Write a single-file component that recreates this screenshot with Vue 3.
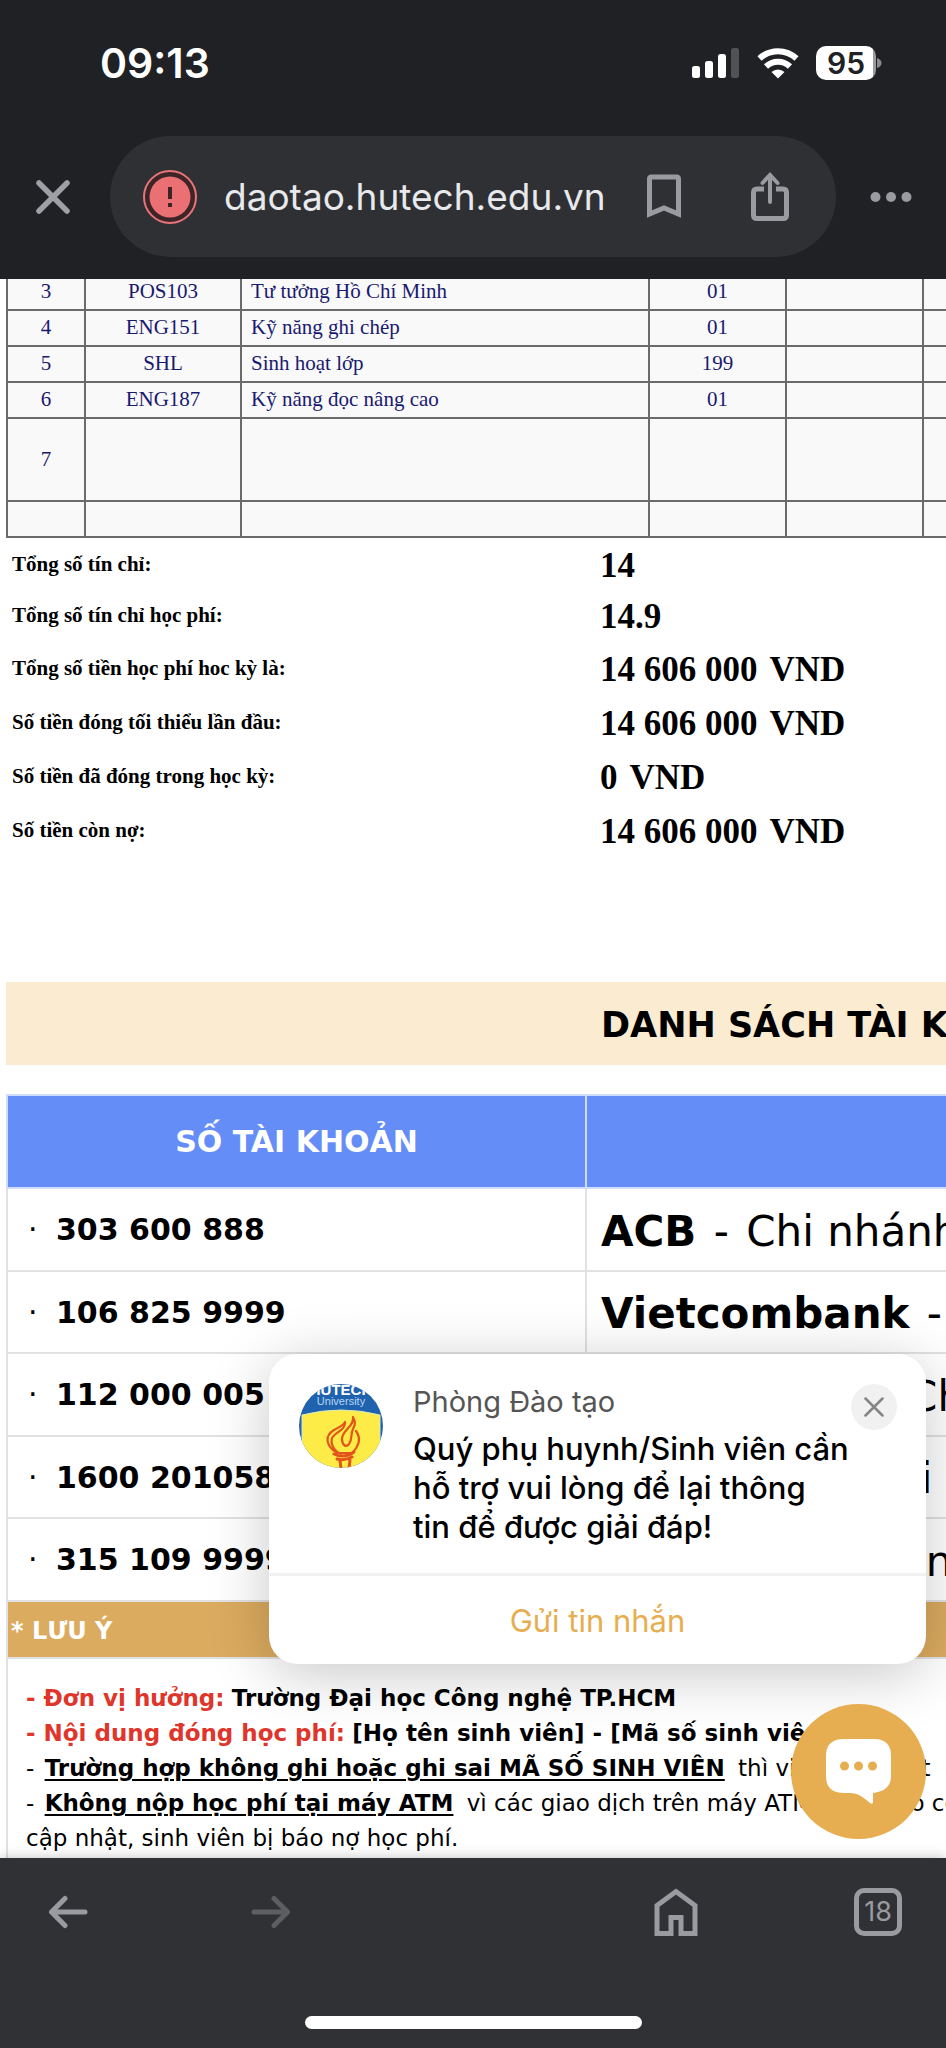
<script setup>
const courses = [
  { no: '3', code: 'POS103', name: 'Tư tưởng Hồ Chí Minh', group: '01' },
  { no: '4', code: 'ENG151', name: 'Kỹ năng ghi chép', group: '01' },
  { no: '5', code: 'SHL', name: 'Sinh hoạt lớp', group: '199' },
  { no: '6', code: 'ENG187', name: 'Kỹ năng đọc nâng cao', group: '01' },
  { no: '7', code: '', name: '', group: '', tall: true },
  { no: '', code: '', name: '', group: '' }
]

const totals = [
  { label: 'Tổng số tín chỉ:', value: '14' },
  { label: 'Tổng số tín chỉ học phí:', value: '14.9' },
  { label: 'Tổng số tiền học phí hoc kỳ là:', value: '14 606 000', unit: 'VND' },
  { label: 'Số tiền đóng tối thiểu lần đầu:', value: '14 606 000', unit: 'VND' },
  { label: 'Số tiền đã đóng trong học kỳ:', value: '0', unit: 'VND' },
  { label: 'Số tiền còn nợ:', value: '14 606 000', unit: 'VND' }
]

const accounts = [
  { number: '303 600 888', bank: 'ACB' },
  { number: '106 825 9999', bank: 'Vietcombank' },
  { number: '112 000 005', bank: 'VietinBank' },
  { number: '1600 201058', bank: 'Agribank' },
  { number: '315 109 9999', bank: 'BIDV' }
]
</script>

<template>
  <div class="screen">
    <header class="top">
      <div class="status">
        <span class="time">09:13</span>
        <div class="indicators">
          <svg width="48" height="32" viewBox="0 0 48 32" aria-hidden="true">
            <rect x="0" y="19" width="8" height="12" rx="2.5" fill="#fff" />
            <rect x="13" y="14" width="8" height="17" rx="2.5" fill="#fff" />
            <rect x="26" y="7" width="8" height="24" rx="2.5" fill="#fff" />
            <rect x="39" y="1" width="8" height="30" rx="2.5" fill="#515256" />
          </svg>
          <svg width="42" height="32" viewBox="0 0 42 32" aria-hidden="true">
            <g fill="none" stroke="#fff" stroke-width="6">
              <path d="M2.5 11.5 A27 27 0 0 1 39.500 11.500" />
              <path d="M9 19.500 A17.500 17.500 0 0 1 33 19.500" />
            </g>
            <path d="M21 31.500 L14.500 25 A9.500 9.500 0 0 1 27.500 25 Z" fill="#fff" />
          </svg>
          <div class="battery">
            <span class="level">95</span>
            <svg width="5" height="10" viewBox="0 0 5 10" aria-hidden="true">
              <path d="M0 0 Q4.500 1.500 4.500 5 Q4.500 8.500 0 10 Z" fill="#8b8c8f" />
            </svg>
          </div>
        </div>
      </div>
      <div class="toolbar">
        <button class="side dismiss" aria-label="Đóng">
          <svg width="36" height="36" viewBox="0 0 36 36">
            <path d="M4 4 L32 32 M32 4 L4 32" stroke="#9fa0a5" stroke-width="5.500" stroke-linecap="round" />
          </svg>
        </button>
        <div class="omnibox">
          <svg width="54" height="54" viewBox="0 0 54 54" aria-hidden="true">
            <circle cx="27" cy="27" r="26" fill="#3d2527" stroke="#e8747a" stroke-width="2" />
            <circle cx="27" cy="27" r="20.500" fill="#ea7074" />
            <path d="M27 17 V29 M27 33 V37" stroke="#3d2527" stroke-width="4" />
          </svg>
          <span class="url">daotao.hutech.edu.vn</span>
          <button class="icon" aria-label="Dấu trang">
            <svg width="34" height="46" viewBox="0 0 34 46">
              <path d="M2.500 40 V5 Q2.500 3 4.500 3 H29.500 Q31.500 3 31.500 5 V40 L17 34 Z" fill="none" stroke="#9a9ba0" stroke-width="5" />
            </svg>
          </button>
          <button class="icon" aria-label="Chia sẻ">
            <svg width="38" height="50" viewBox="0 0 38 50" fill="none" stroke="#9a9ba0">
              <path d="M13 17 H6 Q2.500 17 2.500 20.500 V43 Q2.500 46.500 6 46.500 H32 Q35.500 46.500 35.500 43 V20.500 Q35.500 17 32 17 H25" stroke-width="5" />
              <path d="M19 30 V4 M11.500 11 L19 3 L26.500 11" stroke-width="4" stroke-linecap="round" />
            </svg>
          </button>
        </div>
        <button class="side" aria-label="Thêm">
          <svg width="42" height="10" viewBox="0 0 42 10" fill="#9a9ba0">
            <circle cx="5.500" cy="5" r="5" /><circle cx="21" cy="5" r="5" /><circle cx="36.500" cy="5" r="5" />
          </svg>
        </button>
      </div>
    </header>

    <main class="view">
      <div class="page">
        <table class="courses">
          <colgroup>
            <col class="c-no" /><col class="c-code" /><col class="c-name" /><col class="c-num" /><col class="c-num" /><col />
          </colgroup>
          <tbody>
            <tr v-for="(c, i) in courses" :key="i" :class="{ tall: c.tall }">
              <td>{{ c.no }}</td>
              <td>{{ c.code }}</td>
              <td class="name">{{ c.name }}</td>
              <td>{{ c.group }}</td>
              <td></td>
              <td></td>
            </tr>
          </tbody>
        </table>

        <table class="totals">
          <tbody>
            <tr v-for="t in totals" :key="t.label">
              <th scope="row">{{ t.label }}</th>
              <td>{{ t.value }}<span v-if="t.unit" class="unit">{{ t.unit }}</span></td>
            </tr>
          </tbody>
        </table>

        <h2 class="banner">DANH SÁCH TÀI KHOẢN</h2>

        <table class="accounts">
          <colgroup><col class="c-account" /><col /></colgroup>
          <thead>
            <tr><th scope="col">SỐ TÀI KHOẢN</th><th></th></tr>
          </thead>
          <tbody>
            <tr v-for="a in accounts" :key="a.number">
              <td class="number"><span class="dot">·</span>{{ a.number }}</td>
              <td class="bank"><strong>{{ a.bank }}</strong> <span class="dash">-</span> Chi nhánh</td>
            </tr>
          </tbody>
          <tfoot>
            <tr class="note-head"><th colspan="2">* LƯU Ý</th></tr>
            <tr>
              <td colspan="2" class="notes">
                <p><b class="red">- Đơn vị hưởng:</b> <b>Trường Đại học Công nghệ TP.HCM</b></p>
                <p><b class="red">- Nội dung đóng học phí:</b> <b>[Họ tên sinh viên] - [Mã số sinh viên]</b></p>
                <p>- <b class="rule">Trường hợp không ghi hoặc ghi sai MÃ SỐ SINH VIÊN</b> thì việc cập nhật</p>
                <p>- <b class="rule">Không nộp học phí tại máy ATM</b> vì các giao dịch trên máy ATM không có cơ sở</p>
                <p>cập nhật, sinh viên bị báo nợ học phí.</p>
              </td>
            </tr>
          </tfoot>
        </table>
      </div>

      <section class="popup">
        <div class="message">
          <svg class="avatar" width="84" height="84" viewBox="0 0 84 84" role="img" aria-label="HUTECH University">
            <defs><clipPath id="disc"><circle cx="42" cy="42" r="42" /></clipPath></defs>
            <g clip-path="url(#disc)">
              <rect width="84" height="84" fill="#1f63ae" />
              <path d="M3 31 Q42 21 81 31 V64 L70 84 H14 L3 64 Z" fill="#fdec47" stroke="#d9e8c0" stroke-width="1" />
              <text x="42" y="11" text-anchor="middle" class="logo-name">HUTECH</text>
              <text x="42" y="21" text-anchor="middle" class="logo-sub">University</text>
              <g fill="none" stroke="#e2541b" stroke-width="2.200" stroke-linecap="round" stroke-linejoin="round">
                <path d="M54 33 C56 42 43 46 43 55 C43 61 47 64 50 60 C54 54 51 51 54 45 C57 40 56 37 54 33 Z" />
                <path d="M57 47 C62 54 60 62 53 69 L38 69 C27 62 25 52 35 46 C42 42 45 41 46 38 C47 46 36 48 33 54 C31 62 37 68 42 70" />
                <path d="M35 70 Q45 75 55 68 M38 75 Q46 77 53 73 M41 77 L42 84 M51 76 L50 84" stroke-width="3" />
              </g>
            </g>
          </svg>
          <div class="copy">
            <div class="sender">Phòng Đào tạo</div>
            <p class="text">Quý phụ huynh/Sinh viên cần<br />hỗ trợ vui lòng để lại thông<br />tin để được giải đáp!</p>
          </div>
          <button class="close" aria-label="Đóng tin nhắn">
            <svg width="20" height="20" viewBox="0 0 20 20">
              <path d="M1.500 1.500 L18.500 18.500 M18.500 1.500 L1.500 18.500" stroke="#858585" stroke-width="2.500" stroke-linecap="round" />
            </svg>
          </button>
        </div>
        <button class="send">Gửi tin nhắn</button>
      </section>

      <button class="chat" aria-label="Trò chuyện">
        <svg width="66" height="66" viewBox="0 0 66 66">
          <path d="M18 0 H48 Q65 0 65 17 V37 Q65 52 47 54 V63 Q47 66 44 64 C37 58 32 54 24 54 H18 Q0 54 0 37 V17 Q0 0 18 0 Z" fill="#fff" />
          <g fill="#e7ae51"><circle cx="18.500" cy="27" r="4.500" /><circle cx="32.500" cy="27" r="4.500" /><circle cx="46.500" cy="27" r="4.500" /></g>
        </svg>
      </button>
    </main>

    <footer class="bottom">
      <nav class="nav">
        <button aria-label="Quay lại">
          <svg width="40" height="34" viewBox="0 0 40 34" fill="none" stroke="#9a9ba0" stroke-width="5" stroke-linecap="round" stroke-linejoin="round">
            <path d="M37 17 H4 M17 3.500 L3.500 17 L17 30.500" />
          </svg>
        </button>
        <button aria-label="Tiến" disabled>
          <svg width="40" height="34" viewBox="0 0 40 34" fill="none" stroke="#5d5e62" stroke-width="5" stroke-linecap="round" stroke-linejoin="round">
            <path d="M3 17 H36 M23 3.500 L36.500 17 L23 30.500" />
          </svg>
        </button>
        <span class="gap"></span>
        <button aria-label="Trang chủ">
          <svg width="44" height="48" viewBox="0 0 44 48" fill="none" stroke="#9a9ba0" stroke-width="5">
            <path d="M3 45.500 V17.500 L22 3.500 L41 17.500 V45.500 H27 V29.500 H17 V45.500 Z" />
          </svg>
        </button>
        <button class="tabs" aria-label="18 thẻ">18</button>
      </nav>
      <div class="home-bar"></div>
    </footer>
  </div>
</template>

<style>
html, body { height: 100%; margin: 0; overflow: hidden; }
</style>

<style scoped>
.screen { display: flex; flex-direction: column; height: 100vh; background: #fff; font-family: Inter, "Noto Sans", sans-serif; }
button { border: 0; padding: 0; background: none; font: inherit; cursor: pointer; display: flex; align-items: center; justify-content: center; }
svg { display: block; flex: none; }
table { border-collapse: collapse; table-layout: fixed; }
td, th { padding: 0; }

.top { flex: none; background: #202125; }
.status { display: flex; align-items: center; justify-content: space-between; height: 126px; padding: 0 64px 0 100px; }
.time { color: #fff; font-size: 41px; font-weight: 600; }
.indicators { display: flex; align-items: center; gap: 17px; }
.battery { display: flex; align-items: center; gap: 1px; }
.level { width: 60px; height: 34px; border-radius: 10px; background: linear-gradient(90deg, #fff 95%, #9b9b9d 95%); color: #202125; font-size: 30px; line-height: 34px; font-weight: 600; text-align: center; }
.toolbar { display: flex; align-items: center; padding: 10px 0 22px; }
.side { box-sizing: border-box; width: 110px; height: 80px; }
.dismiss { padding-right: 4px; }
.omnibox { flex: 1; display: flex; align-items: center; height: 121px; padding: 0 47px 0 33px; border-radius: 61px; background: #2f3034; min-width: 0; }
.url { flex: 1; margin-left: 27px; color: #e8e9ed; font-size: 37px; white-space: nowrap; }
.icon + .icon { margin-left: 70px; }

.view { flex: 1; min-height: 0; position: relative; overflow: hidden; }
.page { width: 160%; padding-left: 6px; box-sizing: border-box; font-family: "DejaVu Sans", sans-serif; color: #000; }

.courses { width: 100%; margin-top: -6px; background: #f9f9f9; color: #191970; font: 21px/24px "Liberation Serif", serif; text-align: center; }
.courses td { height: 32px; padding-bottom: 2px; border: 2px solid #6b6b6b; }
.courses .tall td { height: 79px; }
.courses .name { padding-left: 9px; text-align: left; }
.c-no { width: 78px; }
.c-code { width: 156px; }
.c-name { width: 408px; }
.c-num { width: 137px; }

.totals { width: 100%; margin-top: 3px; font-family: "Liberation Serif", serif; font-weight: 700; }
.totals tr { height: 54px; }
.totals tr:nth-child(1) { height: 50px; }
.totals tr:nth-child(2) { height: 52px; }
.totals th { width: 588px; padding: 0 0 4px 6px; font-size: 21px; line-height: 24px; text-align: left; }
.totals td { font-size: 35px; line-height: 40px; }
.unit { margin-left: 12px; }

.banner { margin: 123px 0 29px; padding: 3px 0 0 595px; background: #faebd1; font-size: 35px; line-height: 80px; font-weight: 700; white-space: nowrap; }

.accounts { width: 100%; }
.accounts td, .accounts th { border: 2px solid #e1e1e3; }
.c-account { width: 579px; }
.accounts thead tr { height: 93px; }
.accounts thead th { border-color: #cfdcfb; background: #648df8; color: #fff; font-size: 30px; }
.accounts tbody tr { height: 83px; }
.accounts tbody tr:nth-child(even) { height: 82px; }
.number { font-size: 30px; font-weight: 700; white-space: nowrap; }
.dot { display: inline-block; width: 28px; margin-left: 20px; font-weight: 400; }
.accounts .bank { padding: 4px 0 0 14px; font-size: 42px; line-height: 50px; white-space: nowrap; }
.dash { margin: 0 4px; }
.note-head { height: 57px; }
.note-head th { padding: 2px 0 0 3px; background: #dbab60; color: #fff; font-size: 24px; text-align: left; }
.accounts .notes { padding: 22px 20px 40px 18px; font-size: 23px; line-height: 35px; white-space: nowrap; }
.notes p { margin: 0; }
.rule { margin: 0 6px 0 3px; text-decoration: underline; text-decoration-thickness: 2px; text-underline-offset: 3px; }
.red { color: #e0352b; }

.popup { position: absolute; right: 20px; bottom: 194px; width: 657px; max-width: calc(100% - 40px); border-radius: 28px; background: #fff; box-shadow: 0 10px 60px rgba(0, 0, 0, 0.22); overflow: hidden; }
.message { display: flex; align-items: flex-start; padding: 30px 29px 27px 30px; border-bottom: 3px solid #f1f1f2; }
.copy { flex: 1; margin: 2px 0 0 30px; min-width: 0; }
.sender { color: #555; font-size: 29px; line-height: 32px; }
.text { margin: 11px 0 0; color: #000; font-size: 31px; line-height: 39px; font-weight: 500; }
.close { width: 46px; height: 46px; margin-left: -10px; border-radius: 50%; background: #f1f1f2; }
.send { width: 100%; height: 88px; color: #e7ae51; font-size: 31px; }
.logo-name { fill: #fff; font: 700 15px "Liberation Sans", sans-serif; }
.logo-sub { fill: #b9d3f2; font: 11px "Liberation Sans", sans-serif; }
.chat { position: absolute; right: 20px; bottom: 19px; width: 135px; height: 135px; border-radius: 50%; background: #e7ae51; }

.bottom { flex: none; position: relative; background: #303135; box-shadow: 0 0 12px rgba(0, 0, 0, 0.25); }
.nav { display: flex; justify-content: space-between; align-items: center; height: 108px; padding: 0 44px; }
.nav button, .gap { width: 48px; }
.nav button.tabs { box-sizing: border-box; height: 48px; border: 5px solid #9a9ba0; border-radius: 10px; color: #9a9ba0; font-size: 27px; line-height: 38px; }
.home-bar { width: 337px; height: 13px; margin: 50px auto 19px; border-radius: 7px; background: #fff; }
</style>
